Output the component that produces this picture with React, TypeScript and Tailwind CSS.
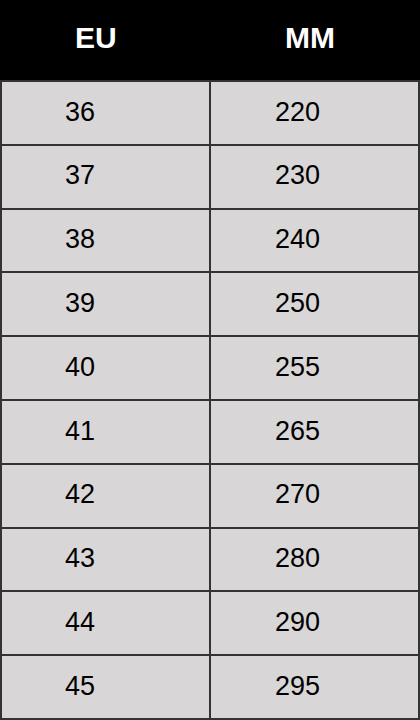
import React from "react";

const rows: [string, string][] = [
  ["36", "220"],
  ["37", "230"],
  ["38", "240"],
  ["39", "250"],
  ["40", "255"],
  ["41", "265"],
  ["42", "270"],
  ["43", "280"],
  ["44", "290"],
  ["45", "295"],
];

export default function App() {
  return (
    <div
      className="w-[420px] h-[720px] flex flex-col bg-[#d8d6d7] overflow-hidden"
      style={{ fontFamily: '"Liberation Sans", Arial, sans-serif' }}
    >
      <div className="h-[80px] shrink-0 bg-black grid grid-cols-[211px_1fr] text-white font-bold text-[30px]">
        <div className="flex items-center pl-[75px] pb-[5px]">EU</div>
        <div className="flex items-center pl-[74px] pb-[5px]">MM</div>
      </div>
      <div className="flex-1 flex flex-col border-l-2 border-r-2 border-b-2 border-[#333333]">
        {rows.map(([eu, mm]) => (
          <div
            key={eu}
            className="flex-1 grid grid-cols-[209px_1fr] border-t-2 border-[#333333] text-black text-[27px]"
          >
            <div className="flex items-center pl-[63px] pb-[2px] border-r-2 border-[#333333]">
              {eu}
            </div>
            <div className="flex items-center pl-[64px] pb-[2px]">{mm}</div>
          </div>
        ))}
      </div>
    </div>
  );
}
